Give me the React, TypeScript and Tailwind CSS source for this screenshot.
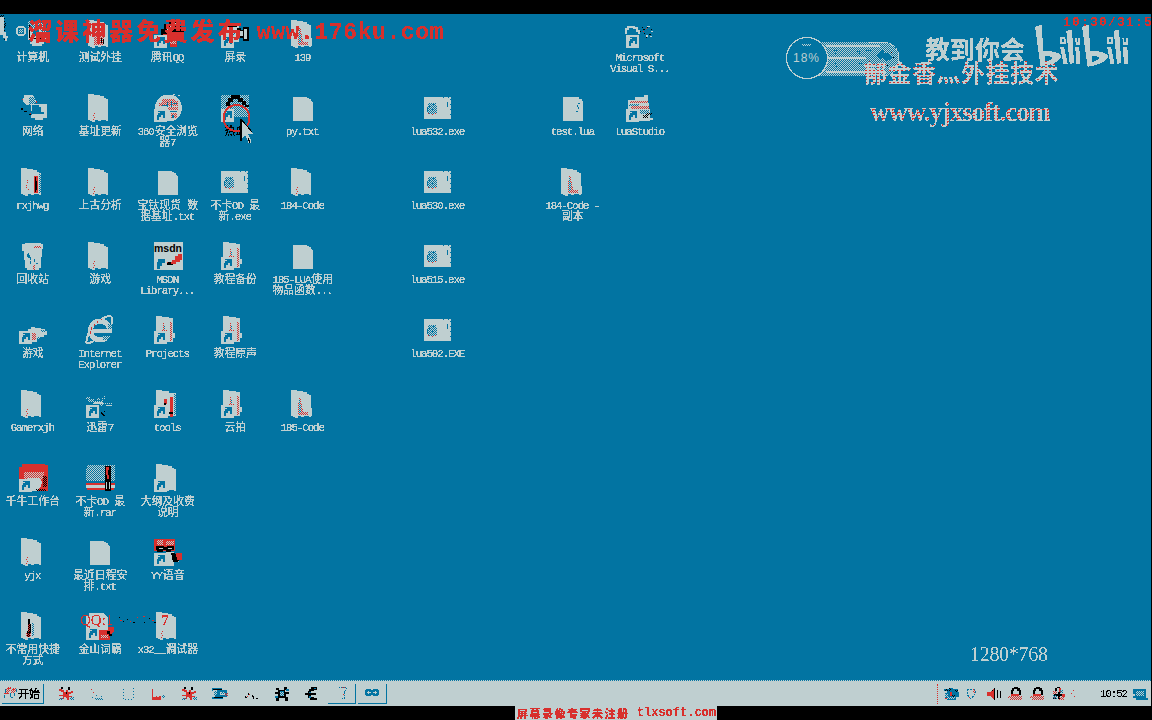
import React from "react";

const G = "#bfcfd0";
const B = "#0274a2";
const R = "#d8302d";
const K = "#000000";

type Kind =
  | "computer" | "folderRed" | "qq" | "camera" | "folder" | "folderBook" | "network" | "browser" | "hotkey"
  | "file" | "exe" | "bin" | "msdn" | "folderLink" | "gamepad" | "ie" | "bird" | "tools" | "workbench"
  | "rar" | "folderPlainLink" | "yy" | "folderPen" | "dict" | "folderCode" | "vs" | "luaFile" | "studio";

type Item = { c: number; r: number; k: Kind; t: string[]; dark?: boolean };

const items: Item[] = [
  { c: 1, r: 1, k: "computer", t: ["计算机"] },
  { c: 1, r: 2, k: "network", t: ["网络"] },
  { c: 1, r: 3, k: "folderBook", t: ["rxjhwg"] },
  { c: 1, r: 4, k: "bin", t: ["回收站"] },
  { c: 1, r: 5, k: "gamepad", t: ["游戏"] },
  { c: 1, r: 6, k: "folder", t: ["Gamerxjh"] },
  { c: 1, r: 7, k: "workbench", t: ["千牛工作台"] },
  { c: 1, r: 8, k: "folder", t: ["yjx"] },
  { c: 1, r: 9, k: "folderPen", t: ["不常用快捷", "方式"] },
  { c: 2, r: 1, k: "folderRed", t: ["测试外挂"] },
  { c: 2, r: 2, k: "folder", t: ["基址更新"] },
  { c: 2, r: 3, k: "folder", t: ["上古分析"] },
  { c: 2, r: 4, k: "folder", t: ["游戏"] },
  { c: 2, r: 5, k: "ie", t: ["Internet", "Explorer"] },
  { c: 2, r: 6, k: "bird", t: ["迅雷7"] },
  { c: 2, r: 7, k: "rar", t: ["不卡OD 最", "新.rar"] },
  { c: 2, r: 8, k: "file", t: ["最近日程安", "排.txt"] },
  { c: 2, r: 9, k: "dict", t: ["金山词霸"] },
  { c: 3, r: 1, k: "qq", t: ["腾讯QQ"] },
  { c: 3, r: 2, k: "browser", t: ["360安全浏览", "器7"] },
  { c: 3, r: 3, k: "file", t: ["宝钛现货 数", "据基址.txt"] },
  { c: 3, r: 4, k: "msdn", t: ["MSDN", "Library..."] },
  { c: 3, r: 5, k: "folderLink", t: ["Projects"] },
  { c: 3, r: 6, k: "tools", t: ["tools"] },
  { c: 3, r: 7, k: "folderPlainLink", t: ["大纲及收费", "说明"] },
  { c: 3, r: 8, k: "yy", t: ["YY语音"] },
  { c: 3, r: 9, k: "folder", t: ["x32__调试器"] },
  { c: 4, r: 1, k: "camera", t: ["屏录"] },
  { c: 4, r: 2, k: "hotkey", t: ["热血"], dark: true },
  { c: 4, r: 3, k: "exe", t: ["不卡OD 最", "新.exe"] },
  { c: 4, r: 4, k: "folderLink", t: ["教程备份"] },
  { c: 4, r: 5, k: "folderLink", t: ["教程原声"] },
  { c: 4, r: 6, k: "folderLink", t: ["云拍"] },
  { c: 5, r: 1, k: "folderCode", t: ["139"] },
  { c: 5, r: 2, k: "file", t: ["py.txt"] },
  { c: 5, r: 3, k: "folder", t: ["184-Code"] },
  { c: 5, r: 4, k: "file", t: ["185-LUA使用", "物品函数..."] },
  { c: 5, r: 6, k: "folderCode", t: ["185-Code"] },
  { c: 7, r: 2, k: "exe", t: ["lua532.exe"] },
  { c: 7, r: 3, k: "exe", t: ["lua530.exe"] },
  { c: 7, r: 4, k: "exe", t: ["lua515.exe"] },
  { c: 7, r: 5, k: "exe", t: ["lua502.EXE"] },
  { c: 9, r: 2, k: "luaFile", t: ["test.lua"] },
  { c: 9, r: 3, k: "folderCode", t: ["184-Code -", "副本"] },
  { c: 10, r: 1, k: "vs", t: ["Microsoft", "Visual S..."] },
  { c: 10, r: 2, k: "studio", t: ["LuaStudio"] },
];

function Defs() {
  return (
    <svg className="absolute h-0 w-0">
      <defs>
        <filter id="crisp" colorInterpolationFilters="sRGB">
          <feComponentTransfer>
            <feFuncA type="discrete" tableValues="0 0 1 1 1" />
          </feComponentTransfer>
        </filter>
        <filter id="crispSmall" colorInterpolationFilters="sRGB">
          <feComponentTransfer>
            <feFuncA type="discrete" tableValues="0 0 0 1 1 1 1 1 1 1" />
          </feComponentTransfer>
        </filter>
        <filter id="crispThin" colorInterpolationFilters="sRGB">
          <feComponentTransfer>
            <feFuncA type="discrete" tableValues="0 1" />
          </feComponentTransfer>
        </filter>
        <pattern id="ditherB" width="2" height="2" patternUnits="userSpaceOnUse">
          <path d="M0 0h1v1h-1zM1 1h1v1h-1z" fill={B} />
        </pattern>
        <pattern id="ditherG" width="2" height="2" patternUnits="userSpaceOnUse">
          <path d="M0 0h1v1h-1zM1 1h1v1h-1z" fill={G} />
        </pattern>
        <pattern id="ditherR" width="2" height="2" patternUnits="userSpaceOnUse">
          <path d="M0 0h1v1h-1zM1 1h1v1h-1z" fill={R} />
        </pattern>
        <pattern id="ditherK" width="2" height="2" patternUnits="userSpaceOnUse">
          <path d="M0 0h1v1h-1zM1 1h1v1h-1z" fill={K} />
        </pattern>
      </defs>
    </svg>
  );
}

const Arrow = () => (
  <g>
    <path d="M0 15H13V28H0Z" fill={G} />
    <path d="M4 17H11V24H9V21H7V23H5V26H3V21H4V19H6V18H4Z" fill={B} />
  </g>
);

const Folder = () => (
  <path d="M2 0H8V1H14V2H18V4H20V5H22V27H20V26H15V27H12V26H9V28H6V27H4V26H2Z" fill={G} />
);

const Specks = () => <path d="M8 19h1v1h-1zM7 21h1v1h-1zM8 23h1v1h-1zM7 25h1v1h-1z" fill={R} />;

function Glyph({ k }: { k: Kind }) {
  switch (k) {
    case "folder":
      return <><Folder /><Specks /></>;
    case "folderRed":
      return <><Folder /><path d="M8 10H18V25H8Z" fill="url(#ditherR)" /><path d="M11 12h2v12h-2z" fill={R} /><path d="M15 18h1v5h-1zM17 19h1v5h-1z" fill={K} /></>;
    case "folderBook":
      return <><Folder /><path d="M15 8H19V25H15Z" fill={R} /><path d="M16 9h1v4h1v9h-1v2h-1z" fill={K} /><path d="M8 12h1v3h-1zM7 16h1v4h-1zM9 20h1v2h-1z" fill="url(#ditherR)" /><path d="M20 6h2v19h-2z" fill="url(#ditherB)" /></>;
    case "folderPen":
      return <><Folder /><path d="M9 7h2v5h1v10h-1v3H8v-6h1z" fill={K} /><path d="M9 12h2v8H9zM7 21h5v4H7z" fill="url(#ditherR)" /><path d="M13 11h2v13h-2z" fill="url(#ditherB)" /></>;
    case "folderCode":
      return <><Folder /><path d="M14 18h9v8H12v-5z" fill={G} /><path d="M10 8h2v5h1v5h1v4h5v3H9V12h1z" fill="url(#ditherR)" /><path d="M10 10h1v5h1v8h-2z" fill="url(#ditherB)" /></>;
    case "folderLink":
      return <><path d="M2 0H8V1H15V2H19V17H21V22H19V26H13V28H2Z" fill={G} /><path d="M9 6h1v9H9zM16 6h2v19h-2zM7 14h6v2H7z" fill="url(#ditherR)" /><path d="M10 9h1v5h-1z" fill="url(#ditherB)" /><Arrow /></>;
    case "folderPlainLink":
      return <><Folder /><Arrow /></>;
    case "tools":
      return <><path d="M2 0H8V1H15V3H22V26H14V28H2Z" fill={G} /><path d="M10 9h3v5h-3z" fill={R} /><path d="M10 13h2v3h-2z" fill={K} /><path d="M16 7h3v20h-3z" fill={R} /><path d="M15 22h4v2h-4z" fill={K} /><path d="M20 4h2v21h-2z" fill="url(#ditherB)" /><Arrow /></>;
    case "file":
      return <path d="M4 3H18V4H20V5H22V7H23V8H24V27H4Z" fill={G} />;
    case "luaFile":
      return <><path d="M4 3H20V5H23V7H24V27H4Z" fill={G} /><path d="M19 9h2v1h-2zM18 11h1v2h-1zM19 13h1v2h-1zM17 17h2v1h-2z" fill={B} /></>;
    case "exe":
      return <><path d="M0 3H27V25H0Z" fill={G} /><path d="M4 9h8v2h1v8h-2v1H5v-1H3v-7h1z" fill="url(#ditherB)" /><path d="M5 11h1v2H4v4H3v-3h1v-2h1zM8 10h2v1H8zM8 14h1v3H8z" fill={B} /><path d="M4 19h1v1h-1zM8 20h1v1h-1zM11 19h1v1h-1z" fill={R} /><path d="M23 8h1v5h-1zM26 5h1v1h-1zM26 10h1v1h-1zM26 15h1v1h-1zM26 20h1v1h-1zM19 3h1v1h-1zM24 3h1v1h-1z" fill={B} /></>;
    case "computer":
      return <><path d="M9 1H27V20H9Z" fill={G} /><path d="M9 1H27V8H9zM22 8h5v10h-5z" fill="url(#ditherB)" /><path d="M14 10h6v6h-6z" fill={B} /><path d="M12 20h13v4h-2v2H13v-2h-2z" fill={G} /><path d="M10 5h1v13h-1zM13 18h9v1h-9z" fill={K} /><circle cx="2" cy="11" r="4.5" fill="none" stroke={G} strokeWidth="2" /><path d="M0 9h4v4H0z" fill="url(#ditherG)" /></>;
    case "network":
      return <><path d="M5 1h9l3 6-2 4H7L4 7z" fill={G} /><path d="M10 3h6v9h-6z" fill="url(#ditherB)" /><path d="M12 10H28V24H13Z" fill={G} /><path d="M13 11H20V13H22V18H25V20H13Z" fill={B} /><path d="M12 21h15v3h-3v2h-8v-2h-4z" fill={G} /><path d="M2 14h2v2H2zM5 17h3v1H5zM10 20h2v1h-2z" fill={K} /><path d="M3 5h1v1H3zM17 7h1v2h-1zM11 19h1v1h-1z" fill={R} /></>;
    case "bin":
      return <><path d="M3 2H6V1H22V2H24V7H23V15H22V26H20V28H8V26H6V18H5V9H3Z" fill={G} /><path d="M9 11h1v2h1v2h1v3h-1v-2h-2v-1H8v-3h1zM11 19h1v3h-1zM15 17h1v3h-1zM17 21h2v1h-2z" fill={B} /><path d="M15 4h7v2h-7zM14 23h2v5h-2z" fill="url(#ditherR)" /></>;
    case "gamepad":
      return <><path d="M9 13h3v-2h4v1h6v1h4v2h2v4h-3v2h-4v2h-3v3H8z" fill={G} /><path d="M22 14h4v2h-4zM18 21h4v3h-4z" fill="url(#ditherB)" /><path d="M13 17h4v7h-4z" fill="url(#ditherR)" /><Arrow /></>;
    case "qq":
      return <><path d="M7 9h3v-5h5V1h8v3h4v7h3v9H8z" fill={K} /><path d="M12 4h5v6h-5zM18 3h5v6h-5z" fill="url(#ditherG)" /><path d="M9 14h18v7H9zM16 21h7v6h-7z" fill={R} /><path d="M16 20h6v4h-6z" fill="url(#ditherG)" /><Arrow /></>;
    case "camera":
      return <><path d="M3 6H18V22H3Z" fill={G} /><path d="M4 5h12v2H4zM16 8h4v2h2V7h6v14h-6v-3h-6z" fill={K} /><path d="M18 11h4v5h-4zM23 9h3v10h-3z" fill={G} /><path d="M9 10h5v5H9z" fill="url(#ditherB)" /><Arrow /></>;
    case "browser":
      return <><circle cx="14.5" cy="14" r="13.5" fill={G} /><path d="M8 5H21V7H24V12H5V9H8zM14 13h10v3H14zM17 19h6v5h-6z" fill="url(#ditherR)" /><path d="M13 8h1v5h-1zM8 11h5v1H8zM17 7h1v6h-1zM19 9h4v1h-4zM16 17h7v1h-7zM18 21h2v3h-2z" fill={B} /><path d="M19 0h2v1h-2zM24 1h2v1h-2z" fill={G} /><Arrow /></>;
    case "hotkey":
      return <><path d="M0 1h28v22H0z" fill="url(#ditherG)" /><path d="M5 12V8h2V4h3V1h9v3h3v3h3v4h3v2h-4v-2h-3V8h-4V5h-5v3H9v4z" fill={K} /><path d="M12 11h10v11H12z" fill="url(#ditherG)" /><Arrow /></>;
    case "msdn":
      return (
        <>
          <path d="M0 0H29V28H0Z" fill={G} />
          <text x="0" y="10" fontSize="11" fontWeight="700" textLength="28" lengthAdjust="spacingAndGlyphs" fontFamily="Liberation Sans, sans-serif" fill={K}>msdn</text>
          <path d="M28 12V18H26V20H22V22H17V23H13V20H18V18H21V14H24V12Z" fill={R} />
          <path d="M14 20h3v2h2v1h-6z" fill={K} />
          <path d="M4 17H11V21H8V24H6V27H3V20H4Z" fill={B} />
        </>
      );
    case "ie":
      return <><circle cx="14" cy="14.5" r="9.5" fill="none" stroke={G} strokeWidth="5" /><path d="M7 13H26V17H7z" fill={G} /><path d="M17 17h11v3h-11z" fill={B} /><path d="M1 24q-3 6 7 1M1 25Q1 12 14 4T26 4T25 9" fill="none" stroke={G} strokeWidth="2" /><path d="M4 15h1v3H4zM5 11h1v3H5zM8 8h1v2H8zM11 5h1v2h-1zM15 3h1v1h-1z" fill={R} /><path d="M17 19h8v5h-8zM22 8h5v5h-5z" fill="url(#ditherB)" /></>;
    case "bird":
      return <><path d="M0 7h4v2h4v2h8v3H7v-2H2V9H0zM18 6h1v3h-2v4h9v1h-9v2h-3v-4h2V8h2zM11 8h3v2h-3z" fill="url(#ditherG)" /><path d="M8 12h9v2H8zM20 15h6v1h-6z" fill={G} /><path d="M15 22h1v1h1v1h1v1h1v1h-2v-1h-1v-1h-1zM18 21h1v1h-1z" fill={K} /><Arrow /></>;
    case "workbench":
      return <><path d="M3 0H26V1H29V27H13V15H0V3H3Z" fill={R} /><path d="M5 8h20v7H13v1H5z" fill="url(#ditherG)" /><path d="M8 14h13l2 4-1 5-5 4h-5z" fill={G} /><path d="M24 12h4v11h-4zM17 25h10v2H17z" fill="url(#ditherK)" /><Arrow /></>;
    case "rar":
      return <><path d="M1 1H29V17H0V4H1z" fill={G} /><path d="M0 1H29V17H0z" fill="url(#ditherB)" /><path d="M0 19H29V21H0zM1 24H28V26H1z" fill={R} /><path d="M0 21H29V24H0z" fill={G} /><path d="M19 2h6v25h-6z" fill={K} /><path d="M20 3h3v3h-1v5h1v4h-2v-4h-1z" fill={R} /><path d="M20 18h1v7h-1zM23 18h1v7h-1z" fill={G} /></>;
    case "yy":
      return <><path d="M0 1H21V13H0z" fill={R} /><path d="M3 2h6v5H3zM12 3h8v4h-8z" fill="url(#ditherG)" /><path d="M2 8h8v1h3V8h7v4h-3v2h-5v-2H9v2H3v-2H2z" fill={K} /><path d="M5 10h4v1H5zM14 10h4v1h-4z" fill={G} /><path d="M12 14h8v5h5v5h-5v4H10z" fill={G} /><path d="M17 15h4l2 4 2 3-2 2h-4z" fill={K} /><path d="M22 15h6v7h-5z" fill={R} /><Arrow /></>;
    case "dict":
      return <><path d="M0 4h3V1h15l4 5v12H0z" fill={G} /><path d="M13 18h9v-3h6v5l-4 3v5H13z" fill={R} /><path d="M21 19h3v3h2v2h-3v-2h-2z" fill={K} /><path d="M15 23h7v3h-7z" fill="url(#ditherG)" /><Arrow /></>;
    case "vs":
      return <><path d="M0 14V9H2V7H8V8H11V11H13V14" fill="none" stroke={G} strokeWidth="1.3" /><path d="M17 9h2v1h-2zM21 7h1v1h-1zM14 11h1v1h-1zM18 13h1v1h-1zM20 17h1v1h-1zM25 9h1v1h-1zM23 14h2v1h-2zM16 7h1v1h-1z" fill={K} /><path d="M21 6h3v1h-3zM25 11h2v1h-2zM20 15h2v2h-2zM24 16h2v1h-2z" fill={G} /><path d="M17 11h1v1h-1zM20 8h1v1h-1z" fill={R} /><Arrow /></>;
    case "studio":
      return <><path d="M2 6H9V3H18V1H22V6L24 18V27H13V16H2Z" fill={G} /><path d="M4 7h18v2H4zM5 12h18v3H5z" fill="url(#ditherR)" /><path d="M3 10h10v2H3zM14 16h9v4h-9z" fill="url(#ditherB)" /><path d="M17 21h3v-2h6v2h-4v3h-5z" fill="url(#ditherK)" /><path d="M14 24h13v2H14z" fill={G} /><Arrow /></>;
  }
}

function Mixed({ text }: { text: string }) {
  const runs = text.match(/[\x20-\x7e]+|[^\x20-\x7e]+/g) ?? [];
  return (
    <>
      {runs.map((run, i) =>
        /[\x20-\x7e]/.test(run) ? (
          <span key={i} className="mr-[1px] whitespace-pre font-['Liberation_Mono','DejaVu_Sans_Mono',monospace] text-[10.8px] tracking-[-1.08px]">{run}</span>
        ) : (
          <span key={i}>{run}</span>
        ),
      )}
    </>
  );
}

function DesktopIcon({ item }: { item: Item }) {
  return (
    <div className="flex flex-col items-center" style={{ gridColumn: item.c, gridRow: item.r }}>
      <svg viewBox="0 0 28 28" shapeRendering="crispEdges" className="h-7 w-7 shrink-0 overflow-visible">
        <Glyph k={item.k} />
      </svg>
      <div className={`mt-[3px] text-center text-[10.8px] leading-[11px] whitespace-nowrap [filter:url(#crispSmall)] ${item.dark ? "text-black" : "text-[#bfcfd0]"}`}>
        {item.t.map((line) => (
          <div key={line} className="h-[11px]"><Mixed text={line} /></div>
        ))}
      </div>
    </div>
  );
}

function BiliLogo() {
  return (
    <svg viewBox="795 70 282 128" shapeRendering="crispEdges" className="absolute top-[10px] left-[1035px] h-[43px] w-[94px]">
      <g fill={G}>
        <path fillRule="evenodd" d="M795 78L815 72L820 150Q872 151 873 168Q868 188 812 198ZM826 166L824 184Q840 180 847 171Q841 164 826 166Z" />
        <path fillRule="evenodd" d="M936 78L956 72L961 150Q1012 151 1014 168Q1009 188 953 198ZM967 166L965 184Q981 180 988 171Q982 164 967 166Z" />
        <path d="M870 137H882L893 188H880ZM889 90L906 86L912 187L899 189ZM916 137H928L930 188H918Z" />
        <path d="M1011 137H1023L1033 188H1021ZM1031 90L1047 86L1054 187L1041 189ZM1058 137H1072L1075 188H1062Z" />
        <path fillRule="evenodd" d="M869 110L886 107L888 130H870ZM875 114V124H881V114ZM914 110H931V132H918ZM920 112V124H925V112Z" />
        <path fillRule="evenodd" d="M1011 110L1028 107L1030 130H1012ZM1017 114V124H1023V114ZM1057 110H1074V132H1060ZM1063 112V124H1068V112Z" />
      </g>
    </svg>
  );
}

function Badge() {
  return (
    <svg viewBox="0 0 116 46" shapeRendering="crispEdges" className="absolute top-[21px] left-[785px] h-[46px] w-[116px]">
      <path d="M30 7H97Q114 8 114 24Q114 40 97 41H30Z" fill="url(#ditherG)" />
      <path d="M40 10H94V12H40zM40 22h40v2H40zM40 36h60v2H40z" fill="url(#ditherG)" transform="translate(1 0)" />
      <path d="M84 7H97Q114 8 114 24Q114 40 97 41" fill="none" stroke={G} strokeDasharray="3 1" />
      <circle cx="22" cy="23" r="20.5" fill={B} stroke={G} strokeWidth="1.2" />
      <path d="M15 9h13l-3 2h-8z" fill="url(#ditherG)" />
      <path d="M49 15h3v1h-3zM50 18h2v1h-2zM49 28h3v1h-3zM50 31h2v1h-2zM72 16h4v1h-4zM73 18h2v1h-2zM81 15h5v1h-5zM73 28h4v1h-4zM95 16l4-1v4l4-2 2 4 4 1-4 3-4 1-2-3-4 1-3-3z" fill={B} />
      <path d="M106 17h1v1h-1zM108 22h1v1h-1zM102 30h1v1h-1z" fill={K} />
      <text x="8" y="27" fontSize="12" textLength="26" fontFamily="Liberation Sans, sans-serif" fill={G}>18%</text>
    </svg>
  );
}

function Watermarks() {
  return (
    <>
      <svg viewBox="0 0 10 30" shapeRendering="crispEdges" className="absolute top-0 left-0 h-[30px] w-[10px]">
        <path d="M0 1h4v8h2v4H0z" fill="url(#ditherK)" />
        <path d="M0 3H4V18H6V22H8V24H7V27H5V24H3V21H0Z" fill={G} />
        <path d="M4 4v13M4 25h2" stroke={K} fill="none" strokeDasharray="1 2" />
      </svg>
      <div className="absolute top-[2px] left-[28px] flex h-[28px] items-center whitespace-pre font-black text-[#d8302d] [filter:url(#crisp)]">
        <span className="text-[24px] leading-7 tracking-[3.1px]">溜课神器免费发布</span>
        <span className="mt-[6px] ml-[12px] font-['Liberation_Mono',monospace] text-[23px] leading-7 tracking-[0.6px]">www.176ku.com</span>
      </div>
      <Badge />
      <div className="absolute top-[20px] left-[925px] text-[25px] leading-7 font-bold whitespace-nowrap text-[#bfcfd0] [filter:url(#crisp)]">教到你会</div>
      <BiliLogo />
      <div className="absolute top-[1px] left-[1063px] w-[88px] overflow-hidden font-['Liberation_Mono',monospace] text-[13px] leading-4 font-bold tracking-[1.2px] whitespace-pre text-[#d8302d] [filter:url(#crispThin)]">10:30/31:5</div>
      <div className="absolute top-[44px] left-[863px] bg-[conic-gradient(#d8302d_25%,#bfcfd0_0)] bg-[length:4px_3px] bg-clip-text text-[24px] leading-7 font-bold tracking-[0.5px] whitespace-nowrap text-transparent [filter:url(#crisp)]">郁金香灬外挂技术</div>
      <div className="absolute top-[83px] left-[870px] bg-[conic-gradient(#d8302d_20%,#bfcfd0_0)] bg-[length:5px_3px] bg-clip-text font-['Liberation_Serif',serif] text-[27px] leading-[30px] font-bold tracking-[-1.1px] whitespace-nowrap text-transparent [filter:url(#crisp)]">www.yjxsoft.com</div>
      <div className="absolute top-[628px] left-[970px] font-['Liberation_Serif',serif] text-[20px] leading-6 tracking-[-0.3px] whitespace-nowrap text-[#bfcfd0] [filter:url(#crispThin)]">1280*768</div>
      <div className="absolute top-[598px] left-[80px] flex items-center gap-1 font-['Liberation_Serif',serif] text-[15px] leading-4 text-[#d8302d] [filter:url(#crispThin)]">
        <span>QQ:1</span>
        <svg viewBox="0 0 40 12" shapeRendering="crispEdges" className="h-3 w-[40px]">
          <path d="M2 3h1v1H2zM6 7h1v1H6zM10 5h1v1h-1zM16 8h2v1h-2zM27 8h1v1h-1zM32 4h1v1h-1zM37 8h2v1h-2z" fill={K} />
          <path d="M3 6h2v1H3zM13 7h1v1h-1zM20 3h1v1h-1zM26 2h2v1h-2zM35 6h2v1h-2z" fill={R} />
        </svg>
        <span className="font-bold">7</span>
      </div>
      <svg viewBox="0 0 32 44" shapeRendering="crispEdges" className="absolute top-[87px] left-[222px] h-[44px] w-[32px]">
        <circle cx="14.5" cy="17" r="13" fill="none" stroke={R} strokeWidth="2" />
        <path d="M19 18V38L23 34L26 40V42H29V39L26 33H31Z" fill={G} />
        <path d="M18 18h1v21h-1zM19 18l11 13M26 37l2 5" stroke={K} fill="none" />
      </svg>
    </>
  );
}

type TaskKind = "splat" | "faint" | "frame" | "boot" | "fish" | "run" | "gear" | "euro";

function TaskGlyph({ k }: { k: TaskKind }) {
  return (
    <svg viewBox="0 0 16 16" shapeRendering="crispEdges" className="h-4 w-4 shrink-0 overflow-visible">
      {k === "splat" && <><path d="M1 3h3v1h2v2h2V4h2v2h3V5h2v2h-2v1h-2v2h3v1h-3v3h-2v-2H8v-1H6v2H3v-1h2v-2H1V9h4V6H3V5H1z" fill={R} /><path d="M3 1h2v2H3zM10 1h2v3h-2zM8 6h1v2H8z" fill={K} /><path d="M1 12h4v2H1zM12 11h4v3h-4z" fill="url(#ditherB)" /></>}
      {k === "faint" && <><path d="M2 3h1v1H2zM4 6h1v1H4z" fill={R} /><path d="M3 11h2v1H3zM6 9h2v1H6zM9 8h1v1H9zM12 7h1v1h-1zM6 12h8v2H6zM11 10h3v1h-3z" fill="url(#ditherB)" /></>}
      {k === "frame" && <path d="M3 3v10h10V2" fill="none" stroke={B} strokeDasharray="1 2" />}
      {k === "boot" && <><path d="M2 3h1v8h3v-1h1v1h2v-1h2v4H2z" fill={R} /><path d="M12 9h3v3h-3z" fill="url(#ditherB)" /></>}
      {k === "fish" && <><path d="M0 2h10v2h5v7h-4v2H0v-2h3V5H0z" fill={B} /><path d="M1 4h4v5H1zM8 6h5v3H8z" fill={G} /><path d="M2 5h3v4H2zM9 6h4v2H9z" fill="url(#ditherB)" /><path d="M1 3h9v1H1zM2 11h9v1H2z" fill={K} /><path d="M13 7h3v3h-3z" fill="url(#ditherR)" /></>}
      {k === "run" && <><path d="M2 10h1v1h1v1H2zM5 7h1v2H5zM9 9h1v1h1v3h-1v-2H9zM13 12h2v1h-2z" fill={K} /><path d="M6 8h1v1H6zM4 10h1v1H4z" fill={R} /></>}
      {k === "gear" && <><path d="M2 2h3v2h5V1h3v3h-2v2h4v2h-3v3h2v4h-3v-3H5v3H2v-3h2V8H1V6h3V4H2z" fill={K} /><path d="M6 5h4v5H6zM1 10h3v2H1zM12 3h3v2h-3z" fill={B} /><path d="M6 6h4v4H6z" fill="url(#ditherG)" /></>}
      {k === "euro" && <><path d="M5 3h2V1h6v3h-3v1H7v2h5v2H7v2h3v1h3v2H6v-2H4V9H1V7h3z" fill={K} /><path d="M5 6h2v1H5zM5 10h2v2H5zM10 2h2v1h-2z" fill={B} /></>}
    </svg>
  );
}

type TrayKind = "bug" | "shield" | "sound" | "penguin" | "penguinB" | "plus" | "dots";

function TrayGlyph({ k }: { k: TrayKind }) {
  return (
    <svg viewBox="0 0 16 16" shapeRendering="crispEdges" className="h-4 w-4 shrink-0 overflow-visible">
      {k === "bug" && <><path d="M1 3h5l2-1 3 1h4v3h1v5h-3v3H4v-2H2V7h2V5H1z" fill={B} /><path d="M2 3h3v2H2zM6 2h2v3H6zM9 9h3v2H9zM12 4h3v2h-3z" fill="url(#ditherK)" /><path d="M2 8h3v3H2zM4 11h8v2H4z" fill="url(#ditherG)" /><path d="M7 6h2v4H7zM2 12h2v1H2z" fill={R} /></>}
      {k === "shield" && <><path d="M3 4L7 3l4 1v4l-3 4H6L3 8z" fill="none" stroke={B} strokeDasharray="2 1" /><path d="M9 3h2v4H9zM5 11h2v1H5z" fill="url(#ditherR)" /></>}
      {k === "sound" && <><path d="M1 6h3l5-4v12l-5-4H1z" fill={R} /><path d="M6 4h1v1H6zM8 2h1v12H8zM11 4h1v8h-1zM14 5h1v7h-1z" fill={K} /></>}
      {(k === "penguin" || k === "penguinB") && <><path d="M4 4h1V2h2V1h4v1h2v2h1v5h-2V5h-2V3H7v2H6v4H4z" fill={K} /><path d="M4 8h8v2H4z" fill={R} /><path d="M1 10h14v4H3v-2H1z" fill="url(#ditherR)" /></>}
      {k === "plus" && <><path d="M7 1h3v1H7zM5 2h2v3H5zM8 6h2v2h3v2h-3v3H8v-3H4V8h4zM3 12h4v1H3z" fill={K} /><path d="M9 2h2v4H9zM12 8h3v3h-3zM4 11h2v1H4z" fill={R} /><path d="M3 5h4v3H3zM9 11h5v3H9z" fill="url(#ditherR)" /><path d="M3 9h4v4H3zM10 4h3v3h-3z" fill="url(#ditherB)" /></>}
      {k === "dots" && <path d="M7 4h1v1H7zM5 7h1v1H5zM8 10h1v1H8z" fill={R} />}
    </svg>
  );
}

function Taskbar() {
  const tasks: TaskKind[] = ["splat", "faint", "frame", "boot", "splat", "fish", "run", "gear", "euro"];
  const tray: TrayKind[] = ["bug", "shield", "sound", "penguin", "penguinB", "plus"];
  return (
    <div className="flex h-[26px] w-[1151px] items-center border-t border-dotted border-[#0274a2] bg-[#bfcfd0]">
      <div className="ml-[2px] flex h-5 w-[42px] items-center border-r border-b border-[#0274a2]">
        <svg viewBox="0 0 16 16" shapeRendering="crispEdges" className="h-4 w-4 shrink-0">
          <path d="M4 3l4-1 1 1-2 5H2zM10 3h5l-2 5H9z" fill="url(#ditherR)" />
          <path d="M5 3h4v1H5zM11 4h2v1h-2zM2 8h5v1H2z" fill={R} />
          <path d="M3 4h1v4H3zM2 10h1v3H2zM8 8h1v4H8zM9 12h2v1H9zM12 8h1v3h-1zM14 4h1v3h-1z" fill={B} />
        </svg>
        <span className="text-[11px] leading-4 font-medium whitespace-nowrap text-black [filter:url(#crisp)]">开始</span>
      </div>
      <div className="ml-[14px] flex items-center gap-[14.8px]">
        {tasks.map((k, i) => <TaskGlyph key={i} k={k} />)}
      </div>
      <div className="ml-[8px] flex h-5 w-[28px] items-center justify-center border-r border-b border-[#0274a2]">
        <svg viewBox="0 0 16 16" shapeRendering="crispEdges" className="h-4 w-4">
          <path d="M5 2h7v3l-2 3v5H7" fill="none" stroke={B} strokeDasharray="1 1" />
          <path d="M8 2h3v1H8zM9 8h1v2H9z" fill="url(#ditherR)" />
        </svg>
      </div>
      <div className="ml-[2px] flex h-5 w-[29px] items-center justify-center border-r border-b border-[#0274a2]">
        <svg viewBox="0 0 16 10" shapeRendering="crispEdges" className="h-[10px] w-4">
          <path d="M3 2h3v1h4V2h3v1h1v3h-1v1h-3V6H6v1H3V6H2V3h1z" fill="none" stroke={B} strokeWidth="1.5" />
          <path d="M7 3h2v3H7z" fill={B} />
        </svg>
      </div>
      <div className="ml-auto flex items-center">
        <div className="mr-[5px] h-5 border-l border-dotted border-[#d8302d]" />
        <div className="flex items-center gap-[5.5px]">
          {tray.map((k, i) => <TrayGlyph key={i} k={k} />)}
        </div>
        <TrayGlyph k="dots" />
        <span className="ml-[18px] w-[27px] font-['Liberation_Mono',monospace] text-[10.8px] leading-4 tracking-[-1.08px] text-black [filter:url(#crisp)]">10:52</span>
        <svg viewBox="0 0 16 16" shapeRendering="crispEdges" className="mr-[3px] ml-[5px] h-4 w-4">
          <path d="M1 3H14V12H16V14H4V12H1V10H3V8H1Z" fill={B} />
          <path d="M4 5h8v5H4z" fill="url(#ditherG)" />
        </svg>
      </div>
    </div>
  );
}

export default function App() {
  return (
    <div className="flex h-[720px] w-[1152px] flex-col overflow-hidden bg-black pt-[14px] font-['Noto_Sans_CJK_SC',sans-serif]">
      <Defs />
      <main className="relative h-[666px] w-[1151px] shrink-0 overflow-hidden bg-[#0274a2]">
        <div className="-ml-px grid w-[675px] grid-cols-[repeat(10,67.5px)] grid-rows-[repeat(9,74px)] pt-[6px]">
          {items.map((item) => <DesktopIcon key={`${item.c}-${item.r}`} item={item} />)}
        </div>
        <Watermarks />
      </main>
      <Taskbar />
      <footer className="ml-[515px] flex h-[14px] w-[202px] items-center justify-between overflow-hidden bg-[#bfcfd0] pl-[2px] whitespace-nowrap text-[#d8302d]">
        <span className="text-[11px] leading-[10px] font-black tracking-[1.5px] [filter:url(#crisp)]">屏幕录像专家未注册</span>
        <span className="mr-px font-['Liberation_Mono',monospace] text-[12px] leading-[12px] font-bold [filter:url(#crisp)]">tlxsoft.com</span>
      </footer>
    </div>
  );
}
